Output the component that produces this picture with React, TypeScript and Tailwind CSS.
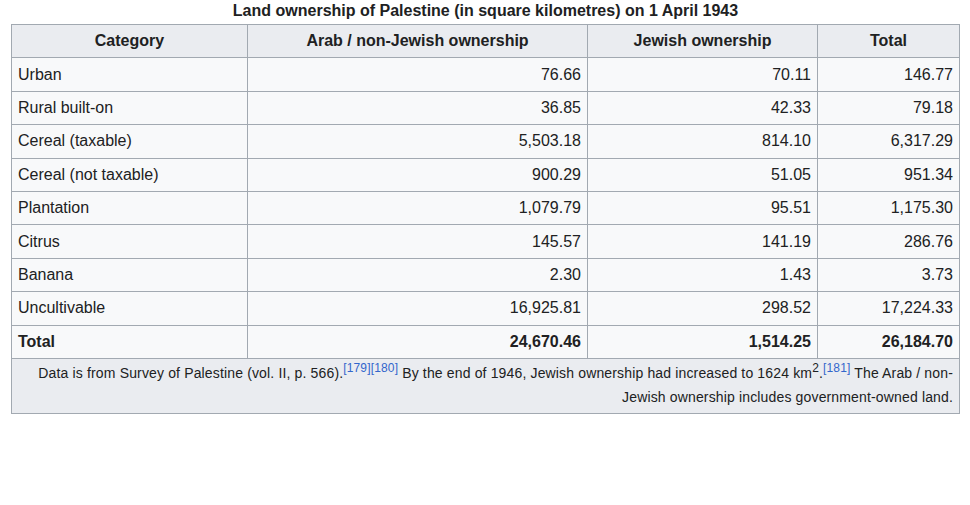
const rows: [string, string, string, string][] = [
  ["Urban", "76.66", "70.11", "146.77"],
  ["Rural built-on", "36.85", "42.33", "79.18"],
  ["Cereal (taxable)", "5,503.18", "814.10", "6,317.29"],
  ["Cereal (not taxable)", "900.29", "51.05", "951.34"],
  ["Plantation", "1,079.79", "95.51", "1,175.30"],
  ["Citrus", "145.57", "141.19", "286.76"],
  ["Banana", "2.30", "1.43", "3.73"],
  ["Uncultivable", "16,925.81", "298.52", "17,224.33"],
];
export default function App() {
  const td = "border border-[#a2a9b1] px-[6px] h-[33.4px] py-0";
  return (
    <div className="bg-white w-[970px] h-[505px] pl-[11px] pt-[2px] text-[#202122]" style={{ fontFamily: '"Liberation Sans", Arial, sans-serif' }}>
      <table className="border-collapse w-[948px] table-fixed text-[16px] bg-[#f8f9fa]">
        <caption className="font-bold text-[16px] h-[22px] leading-[18px]">Land ownership of Palestine (in square kilometres) on 1 April 1943</caption>
        <colgroup>
          <col className="w-[236px]" />
          <col className="w-[340px]" />
          <col className="w-[230px]" />
          <col className="w-[142px]" />
        </colgroup>
        <thead>
          <tr className="bg-[#eaecf0] font-bold">
            {["Category", "Arab / non-Jewish ownership", "Jewish ownership", "Total"].map((h) => (
              <th key={h} className={`${td} text-center`}>{h}</th>
            ))}
          </tr>
        </thead>
        <tbody>
          {rows.map((r) => (
            <tr key={r[0]}>
              <td className={`${td} text-left`}>{r[0]}</td>
              <td className={`${td} text-right`}>{r[1]}</td>
              <td className={`${td} text-right`}>{r[2]}</td>
              <td className={`${td} text-right`}>{r[3]}</td>
            </tr>
          ))}
          <tr className="font-bold">
            <td className={`${td} text-left`}>Total</td>
            <td className={`${td} text-right`}>24,670.46</td>
            <td className={`${td} text-right`}>1,514.25</td>
            <td className={`${td} text-right`}>26,184.70</td>
          </tr>
          <tr className="bg-[#eaecf0]">
            <td colSpan={4} className="border border-[#a2a9b1] px-[6px] pt-[2px] pb-[4px] text-right text-[14px] leading-[24px] tracking-[0.15px]">
              Data is from Survey of Palestine (vol. II, p. 566).<sup className="text-[#3366cc] text-[12px]">[179][180]</sup> By the end of 1946, Jewish ownership had increased to 1624 km<sup className="text-[12px]">2</sup>.<sup className="text-[#3366cc] text-[12px]">[181]</sup> The Arab / non-<br />Jewish ownership includes government-owned land.
            </td>
          </tr>
        </tbody>
      </table>
    </div>
  );
}
